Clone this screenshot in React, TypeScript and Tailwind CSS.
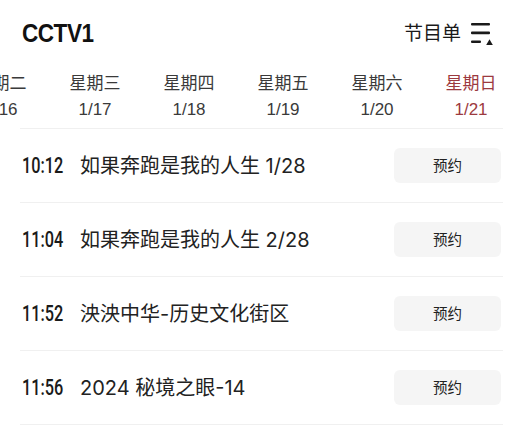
import React from "react";

const days = [
  { name: "星期二", date: "1/16" },
  { name: "星期三", date: "1/17" },
  { name: "星期四", date: "1/18" },
  { name: "星期五", date: "1/19" },
  { name: "星期六", date: "1/20" },
  { name: "星期日", date: "1/21", active: true },
];

const programs = [
  { time: "10:12", title: "如果奔跑是我的人生 1/28" },
  { time: "11:04", title: "如果奔跑是我的人生 2/28" },
  { time: "11:52", title: "泱泱中华-历史文化街区" },
  { time: "11:56", title: "2024 秘境之眼-14" },
];

const sans = "font-['Inter','Noto_Sans_CJK_SC',sans-serif]";

function ListIcon() {
  return (
    <svg width="22" height="24" viewBox="0 0 22 24" className="block">
      <rect x="0" y="1" width="19" height="2.6" rx="1" fill="#1a1a1a" />
      <rect x="0" y="9.6" width="19" height="2.6" rx="1" fill="#1a1a1a" />
      <rect x="0" y="18.4" width="10" height="2.6" rx="1" fill="#1a1a1a" />
      <path d="M15.2 23 L18.5 17.2 L21.8 23 Z" fill="#1a1a1a" />
    </svg>
  );
}

export default function App() {
  return (
    <div className={`w-[523px] h-[437px] overflow-hidden bg-white ${sans}`}>
      <header className="flex items-center justify-between pl-[22px] pr-[30px] pt-[19px] h-[48px]">
        <h1 className="inline-block origin-left scale-x-[0.9] text-[25px] leading-none font-bold text-[#111] tracking-[-0.5px] font-['Liberation_Sans',sans-serif]">
          CCTV1
        </h1>
        <div className="flex items-center gap-[10px]">
          <span className="text-[19px] leading-none text-[#1a1a1a]">节目单</span>
          <ListIcon />
        </div>
      </header>

      <nav className="flex ml-[-46px] mt-[25px] h-[55px]">
        {days.map((d) => (
          <div
            key={d.date}
            className={`w-[94px] shrink-0 flex flex-col items-center ${
              d.active ? "text-[#9c3a40]" : "text-[#3a3a3a]"
            }`}
          >
            <span className="text-[17px] leading-[20px]">{d.name}</span>
            <span className="text-[17px] leading-[20px] mt-[7px] font-['Liberation_Sans',sans-serif]">
              {d.date}
            </span>
          </div>
        ))}
      </nav>

      <ul className="mx-[20px] border-t border-[#f0f0f0]">
        {programs.map((p) => (
          <li
            key={p.time}
            className="flex items-center h-[74px] border-b border-[#f0f0f0]"
          >
            <span className="w-[60px] shrink-0 pl-[2px]">
              <span className="inline-block origin-left scale-x-[0.74] text-[22px] font-medium text-[#1a1a1a] font-['Roboto',sans-serif]">
                {p.time}
              </span>
            </span>
            <span className="flex-1 text-[20px] text-[#222] whitespace-nowrap">
              {p.title}
            </span>
            <button className="w-[107px] h-[35px] mr-[2px] rounded-[6px] bg-[#f5f5f5] text-[14.5px] text-[#222]">
              预约
            </button>
          </li>
        ))}
      </ul>
    </div>
  );
}
